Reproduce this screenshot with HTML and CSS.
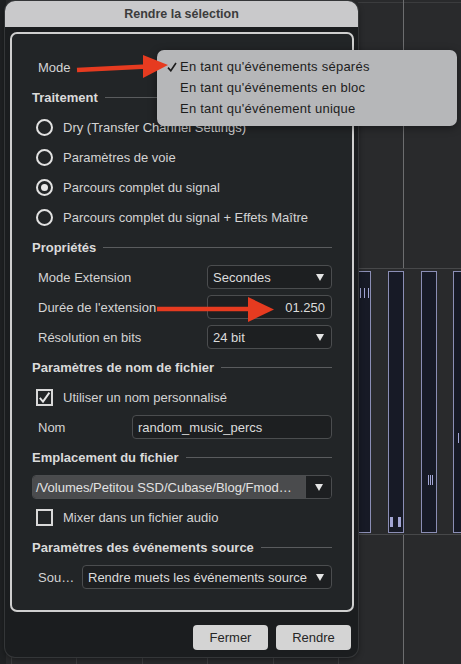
FILE: index.html
```html
<!DOCTYPE html>
<html lang="fr">
<head>
<meta charset="utf-8">
<title>Rendre la sélection</title>
<link rel="stylesheet" href="styles.css">
</head>
<body>
<div class="desk">
  <div class="desk-left"></div>
  <div class="hline top-line"></div>
  <div class="hline band-top"></div>
  <div class="hline band-bottom"></div>
  <div class="vline v-upper"></div>
  <div class="vline v-lower"></div>
  <div class="track t1"><i class="tk k1a"></i><i class="tk k1b"></i><i class="tk k1c"></i></div>
  <div class="track t2"><i class="tk blk k2a"></i><i class="tk blk k2b"></i></div>
  <div class="track t3"><i class="tk k3a"></i><i class="tk k3b"></i><i class="tk k3c"></i></div>
  <div class="track t4"><i class="tk k4a"></i></div>
  <div class="gridline g1"></div><div class="gridline g2"></div><div class="gridline g3"></div>
  <div class="gridline g4"></div><div class="gridline g5"></div><div class="gridline g6"></div>
</div>

<div class="dialog">
  <div class="titlebar">Rendre la sélection</div>
  <div class="panel">
    <div class="row"><span class="label">Mode</span></div>
    <div class="row section">Traitement</div>
    <div class="row radio-row"><span class="radio"></span><span>Dry (Transfer Channel Settings)</span></div>
    <div class="row radio-row"><span class="radio"></span><span>Paramètres de voie</span></div>
    <div class="row radio-row"><span class="radio on"></span><span>Parcours complet du signal</span></div>
    <div class="row radio-row"><span class="radio"></span><span>Parcours complet du signal + Effets Maître</span></div>
    <div class="row section">Propriétés</div>
    <div class="row"><span class="label">Mode Extension</span><div class="select w125"><span>Secondes</span><span class="tri"></span></div></div>
    <div class="row"><span class="label">Durée de l'extension</span><div class="select w125 value">01.250</div></div>
    <div class="row"><span class="label">Résolution en bits</span><div class="select w125"><span>24 bit</span><span class="tri"></span></div></div>
    <div class="row section">Paramètres de nom de fichier</div>
    <div class="row radio-row"><span class="check"><svg viewBox="0 0 13 13" width="13" height="13"><path d="M1.8 6.8 L5 10.6 L11.4 1.6" fill="none" stroke="#e6e6e6" stroke-width="1.9"/></svg></span><span>Utiliser un nom personnalisé</span></div>
    <div class="row"><span class="label">Nom</span><div class="select w200 input">random_music_percs</div></div>
    <div class="row section">Emplacement du fichier</div>
    <div class="row"><div class="pathsel"><span class="pathtext">/Volumes/Petitou SSD/Cubase/Blog/Fmod…</span><span class="pathbtn"><span class="tri"></span></span></div></div>
    <div class="row radio-row"><span class="check"></span><span>Mixer dans un fichier audio</span></div>
    <div class="row section">Paramètres des événements source</div>
    <div class="row"><span class="label">Sou…</span><div class="select w250"><span>Rendre muets les événements source</span><span class="tri"></span></div></div>
  </div>
  <div class="buttons">
    <button class="btn">Fermer</button>
    <button class="btn">Rendre</button>
  </div>
  <div class="popup">
    <div class="item"><span class="mark"><svg viewBox="0 0 10 10" width="10" height="10"><path d="M1 5.6 L3.8 8.8 L9 1" fill="none" stroke="#1d1d1d" stroke-width="1.6"/></svg></span>En tant qu'événements séparés</div>
    <div class="item">En tant qu'événements en bloc</div>
    <div class="item">En tant qu'événement unique</div>
  </div>
</div>

<svg class="arrows" width="461" height="664" viewBox="0 0 461 664">
  <line x1="77" y1="70" x2="147" y2="66.5" stroke="#e63b20" stroke-width="4.5"/>
  <polygon points="143,55 168,65 143,78" fill="#e63b20"/>
  <line x1="157" y1="309" x2="251" y2="309" stroke="#e63b20" stroke-width="4.5"/>
  <polygon points="248,297 274,309.5 248,322" fill="#e63b20"/>
</svg>
</body>
</html>
```
FILE: styles.css
```css
* { box-sizing: border-box; }

body {
  margin: 0;
  width: 461px;
  height: 664px;
  background: #292a2c;
  font-family: "Liberation Sans", Arial, sans-serif;
  font-size: 13px;
  overflow: hidden;
  position: relative;
}

/* background canvas */
.desk { position: absolute; inset: 0; }
.desk-left { position: absolute; left: 0; top: 0; width: 6px; height: 664px; background: #1f2123; }
.hline { position: absolute; left: 358px; right: 0; height: 1px; background: #47484a; }
.top-line { top: 2px; background: #3b3c3e; }
.band-top { top: 268px; }
.band-bottom { top: 534px; }
.vline { position: absolute; left: 403px; width: 1px; background: #6c6d6f; }
.v-upper { top: 0; height: 268px; }
.v-lower { top: 535px; height: 129px; }
.track { position: absolute; top: 271px; height: 262px; background: #171a26; border: 1px solid #8b8eb5; }
.t1 { left: 350px; width: 21px; }
.t2 { left: 388px; width: 16px; }
.t3 { left: 421px; width: 16px; }
.t4 { left: 453px; width: 16px; }
.tk { position: absolute; width: 1px; background: #a3a6d4; }
.k1a, .k1b, .k1c { top: 16px; height: 10px; }
.k1a { left: 9px; } .k1b { left: 13px; } .k1c { left: 17px; }
.blk { width: 3px; top: 245px; height: 10px; }
.k2a { left: 1px; } .k2b { left: 9px; }
.k3a, .k3b, .k3c { top: 203px; height: 10px; }
.k3a { left: 6px; } .k3b { left: 8px; } .k3c { left: 10px; }
.k4a { left: 4px; top: 161px; height: 10px; }
.gridline { position: absolute; top: 657px; height: 7px; width: 1px; background: #3c3d3f; }
.g1 { left: 11px; } .g2 { left: 76px; } .g3 { left: 142px; }
.g4 { left: 207px; } .g5 { left: 273px; } .g6 { left: 338px; }

/* dialog window */
.dialog {
  position: absolute;
  left: 5px;
  top: 1px;
  width: 353px;
  height: 656px;
  background: #1b1d1f;
  border-radius: 10px;
  box-shadow: 0 0 0 1px #343638, 0 2px 6px rgba(0, 0, 0, 0.45);
  display: flex;
  flex-direction: column;
}

.titlebar {
  height: 26px;
  flex: none;
  background: #c9c9cb;
  border-radius: 10px 10px 0 0;
  color: #3c3c3c;
  font-weight: bold;
  font-size: 12.5px;
  display: flex;
  align-items: center;
  justify-content: center;
}

.panel {
  margin: 5px 4px 0 5px;
  height: 580px;
  flex: none;
  border: 2px solid #cfcfcf;
  border-radius: 7px;
  background: #222527;
  padding: 18px 20px;
  color: #d4d4d4;
}

.row {
  height: 30px;
  display: flex;
  align-items: center;
  white-space: nowrap;
}

.section { font-weight: bold; color: #dadada; }
.section::after {
  content: "";
  flex: 1;
  height: 1px;
  background: #5a5c5e;
  margin-left: 7px;
}

.label { padding-left: 6px; flex: 1; }

.radio-row { padding-left: 4px; gap: 10px; }

.radio {
  width: 17px;
  height: 17px;
  flex: none;
  border: 2px solid #e2e2e2;
  border-radius: 50%;
  display: flex;
  align-items: center;
  justify-content: center;
}
.radio.on::after {
  content: "";
  width: 7px;
  height: 7px;
  border-radius: 50%;
  background: #e8e8e8;
}

.check {
  width: 17px;
  height: 17px;
  flex: none;
  border: 2px solid #d9d9d9;
  display: flex;
  align-items: center;
  justify-content: center;
}

.select {
  height: 24px;
  flex: none;
  border: 1px solid #4b4d4f;
  border-radius: 4px;
  background: #1d1f21;
  display: flex;
  align-items: center;
  padding: 0 7px 0 5px;
  color: #dcdcdc;
}
.w125 { width: 125px; }
.w200 { width: 200px; }
.w250 { width: 250px; }
.value { justify-content: flex-end; padding-right: 6px; }

.tri {
  margin-left: auto;
  width: 0;
  height: 0;
  border-left: 4.5px solid transparent;
  border-right: 4.5px solid transparent;
  border-top: 7px solid #e4e4e4;
}

.pathsel {
  width: 300px;
  height: 24px;
  display: flex;
  border: 1px solid #4b4d4f;
  border-radius: 4px;
  overflow: hidden;
}
.pathtext {
  flex: 1;
  background: #4a4b4d;
  color: #e2e2e2;
  display: flex;
  align-items: center;
  padding-left: 3px;
}
.pathbtn {
  width: 26px;
  background: #1d1f21;
  border-left: 1px solid #4b4d4f;
  display: flex;
  align-items: center;
  padding-right: 8px;
}

.buttons {
  margin-top: 13px;
  display: flex;
  justify-content: flex-end;
  gap: 8px;
  padding-right: 7px;
}
.btn {
  width: 75px;
  height: 25px;
  border: none;
  border-radius: 4px;
  background: #d4d4d4;
  color: #262626;
  font-family: inherit;
  font-size: 13px;
  padding: 0;
}

/* dropdown menu overlay */
.popup {
  position: absolute;
  left: 152px;
  top: 49px;
  width: 300px;
  height: 76px;
  background: #b6b7b9;
  border-radius: 7px;
  padding-top: 6px;
  color: #1d1d1d;
  box-shadow: 0 2px 8px rgba(0, 0, 0, 0.4);
}
.item {
  height: 21px;
  line-height: 21px;
  padding-left: 23px;
  position: relative;
  letter-spacing: 0.25px;
  white-space: nowrap;
}
.mark { position: absolute; left: 10px; top: 6px; width: 10px; height: 10px; display: flex; }

.arrows { position: absolute; left: 0; top: 0; pointer-events: none; }
```
